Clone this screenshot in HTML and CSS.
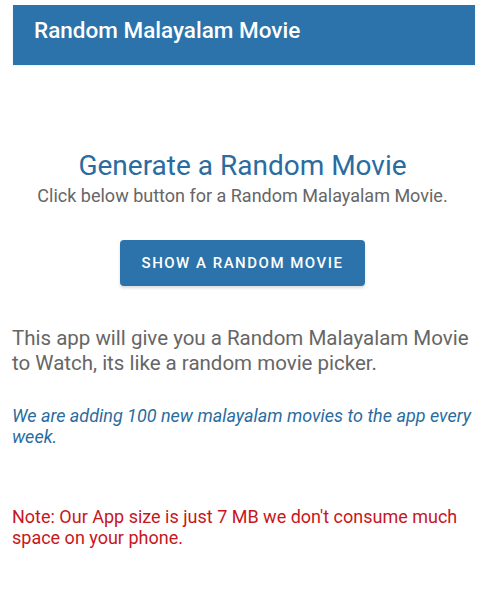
FILE: index.html
```html
<!DOCTYPE html>
<html lang="en">
<head>
    <meta charset="UTF-8">
    <meta name="viewport" content="width=device-width, initial-scale=1.0">
    <title>Random Malayalam Movie</title>
    <link rel="stylesheet" href="styles.css">
</head>
<body>
    <div class="header">
        <h1>Random Malayalam Movie</h1>
    </div>

    <div class="container">
        <div class="intro">
            <h2>Generate a Random Movie</h2>
            <p>Click below button for a Random Malayalam Movie.</p>
        </div>

        <div class="actions">
            <button id="showMovie">Show a Random Movie</button>
        </div>

        <p class="about">This app will give you a Random Malayalam Movie to Watch, its like a random movie picker.</p>

        <p class="update">We are adding 100 new malayalam movies to the app every week.</p>

        <p class="note">Note: Our App size is just 7 MB we don't consume much space on your phone.</p>
    </div>
</body>
</html>
```

FILE: styles.css
```css
:root {
    --primary: #2b73aa;
    --heading: #2a6c9f;
    --text-grey: #666666;
    --note: #c8161d;
}

* {
    margin: 0;
    padding: 0;
    box-sizing: border-box;
}

body {
    background-color: #ffffff;
    font-family: Roboto, 'Noto Sans', sans-serif;
    color: var(--text-grey);
}

.header {
    margin: 5px 10px 0 13px;
    height: 60px;
    padding: 0 21px;
    display: flex;
    align-items: center;
    background-color: var(--primary);
    box-shadow: 0 1px 2px rgba(33, 150, 243, 0.15);
}

.header h1 {
    font-size: 22.5px;
    font-weight: 500;
    color: #ffffff;
    margin-top: -10px;
}

.container {
    padding: 0 12px;
}

.intro {
    text-align: center;
    margin-top: 84px;
}

.intro h2 {
    font-size: 28px;
    font-weight: 400;
    color: var(--heading);
    line-height: 34px;
}

.intro p {
    font-size: 18px;
    line-height: 26px;
}

.actions {
    display: flex;
    justify-content: center;
    margin-top: 31px;
}

button {
    width: 245px;
    height: 46px;
    border: none;
    border-radius: 4px;
    background-color: var(--primary);
    color: #ffffff;
    font-family: Roboto, sans-serif;
    font-size: 15px;
    font-weight: 500;
    letter-spacing: 1.5px;
    text-transform: uppercase;
    box-shadow: 0 2px 3px rgba(0, 0, 0, 0.15);
    cursor: pointer;
}

.about {
    margin-top: 40px;
    font-size: 20.5px;
    line-height: 25px;
}

.update {
    margin-top: 29px;
    font-size: 18px;
    line-height: 21px;
    font-style: italic;
    color: var(--heading);
}

.note {
    margin-top: 59px;
    font-size: 18px;
    line-height: 21px;
    color: var(--note);
}
```
